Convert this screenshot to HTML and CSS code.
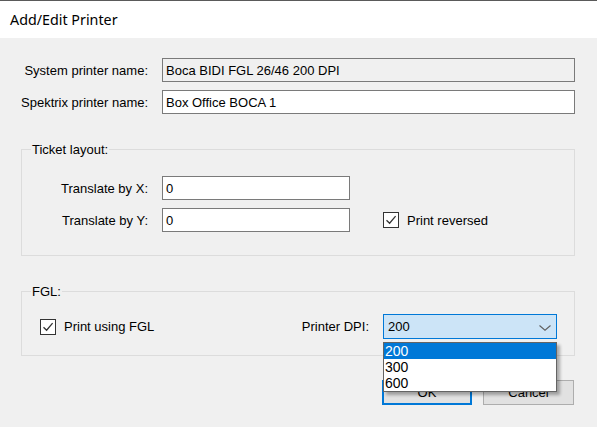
FILE: index.html
```html
<!DOCTYPE html>
<html>
<head>
<meta charset="utf-8">
<link rel="stylesheet" href="styles.css">
</head>
<body>
<div class="window">
  <div class="titlebar">Add/Edit Printer</div>
  <div class="content">
    <div class="row">
      <label class="lbl">System printer name:</label>
      <div class="field readonly">Boca BIDI FGL 26/46 200 DPI</div>
    </div>
    <div class="row row2">
      <label class="lbl">Spektrix printer name:</label>
      <div class="field">Box Office BOCA 1</div>
    </div>

    <fieldset class="group ticket">
      <legend>Ticket layout:</legend>
      <div class="grow first">
        <label class="glbl">Translate by X:</label>
        <div class="field small">0</div>
      </div>
      <div class="grow second">
        <label class="glbl">Translate by Y:</label>
        <div class="field small">0</div>
        <div class="check rev">
          <span class="box"><svg width="14" height="14" viewBox="0 0 14 14"><path d="M2.5 7.2 L5.6 10.2 L11.6 3.2" fill="none" stroke="#333" stroke-width="1.3"/></svg></span>
          <span class="ctext">Print reversed</span>
        </div>
      </div>
    </fieldset>

    <fieldset class="group fgl">
      <legend>FGL:</legend>
      <div class="frow">
        <div class="check fglcheck">
          <span class="box"><svg width="14" height="14" viewBox="0 0 14 14"><path d="M2.5 7.2 L5.6 10.2 L11.6 3.2" fill="none" stroke="#333" stroke-width="1.3"/></svg></span>
          <span class="ctext">Print using FGL</span>
        </div>
        <label class="dpilbl">Printer DPI:</label>
        <div class="combo">
          <span>200</span>
          <svg class="chev" width="12" height="6" viewBox="0 0 12 6"><path d="M0.5 0.5 L6 5.2 L11.5 0.5" fill="none" stroke="#606060" stroke-width="1.1"/></svg>
        </div>
      </div>
    </fieldset>

    <div class="buttons">
      <div class="btn ok">OK</div>
      <div class="btn cancel">Cancel</div>
    </div>
  </div>

  <div class="droplist">
    <div class="item sel">200</div>
    <div class="item">300</div>
    <div class="item">600</div>
  </div>
</div>
</body>
</html>
```

FILE: styles.css
```css
* { box-sizing: border-box; }
html, body {
  margin: 0;
  padding: 0;
  background: #f0f0f0;
}
.window {
  position: relative;
  width: 597px;
  height: 427px;
  overflow: hidden;
  font-family: "Liberation Sans", Arial, sans-serif;
  font-size: 13px;
  color: #000;
  background: #f0f0f0;
}
.titlebar {
  height: 38px;
  border-top: 1px solid #5a5a5a;
  background: #ffffff;
  display: flex;
  align-items: center;
  padding-left: 10px;
  font-family: "Noto Sans", "Open Sans", sans-serif;
  font-size: 14.3px;
  color: #000;
}
.content {
  padding: 20px 22px 0 21px;
}
.row {
  display: flex;
  align-items: center;
  height: 24px;
}
.row2 {
  margin-top: 8px;
}
.lbl {
  width: 127px;
  text-align: right;
  white-space: nowrap;
  margin-right: 14px;
}
.field {
  flex: 1;
  height: 24px;
  border: 1px solid #7a7a7a;
  background: #ffffff;
  padding-left: 3px;
  display: flex;
  align-items: center;
  white-space: nowrap;
}
.field.readonly {
  background: #f0f0f0;
}
.group {
  margin: 28px 0 0 0;
  padding: 0;
  border: 1px solid #dcdcdc;
  min-width: 0;
}
.group legend {
  margin-left: 9px;
  padding: 0 1px;
  line-height: 15px;
  font-size: 13px;
}
.grow {
  display: flex;
  align-items: center;
  height: 24px;
}
.grow.first { margin-top: 19px; }
.grow.second { margin-top: 8px; margin-bottom: 23px; }
.glbl {
  width: 126px;
  text-align: right;
  white-space: nowrap;
  margin-right: 14px;
}
.field.small {
  flex: none;
  width: 188px;
}
.check {
  display: flex;
  align-items: center;
}
.rev { margin-left: 33px; }
.box {
  width: 16px;
  height: 16px;
  border: 1px solid #333333;
  background: #ffffff;
  display: flex;
  align-items: center;
  justify-content: center;
  margin-right: 8px;
}
.box svg { display: block; }
.fgl { margin-top: 28px; }
.frow {
  display: flex;
  align-items: center;
  height: 25px;
  margin-top: 15px;
  margin-bottom: 16px;
}
.fglcheck { margin-left: 18px; }
.dpilbl {
  margin-left: auto;
  margin-right: 14px;
  white-space: nowrap;
}
.combo {
  width: 174px;
  height: 25px;
  margin-right: 17px;
  background: #cce4f7;
  border: 1px solid #0078d7;
  display: flex;
  align-items: center;
  padding-left: 4px;
  position: relative;
}
.chev {
  position: absolute;
  right: 5px;
  top: 10px;
}
.buttons {
  display: flex;
  justify-content: flex-end;
  margin-top: 24px;
  margin-right: 1px;
}
.btn {
  height: 25px;
  background: #e1e1e1;
  border: 1px solid #adadad;
  display: flex;
  align-items: center;
  justify-content: center;
}
.ok {
  width: 90px;
  border: 2px solid #0078d7;
  margin-right: 11px;
}
.cancel {
  width: 91px;
}
.droplist {
  position: absolute;
  left: 383px;
  top: 342px;
  width: 174px;
  height: 50px;
  border: 1px solid #646464;
  background: #ffffff;
  box-shadow: 3px 3px 3px rgba(0, 0, 0, 0.3);
  font-size: 14px;
}
.item {
  height: 16px;
  line-height: 16px;
  padding-left: 1px;
}
.item.sel {
  background: #0078d7;
  color: #ffffff;
}
```
